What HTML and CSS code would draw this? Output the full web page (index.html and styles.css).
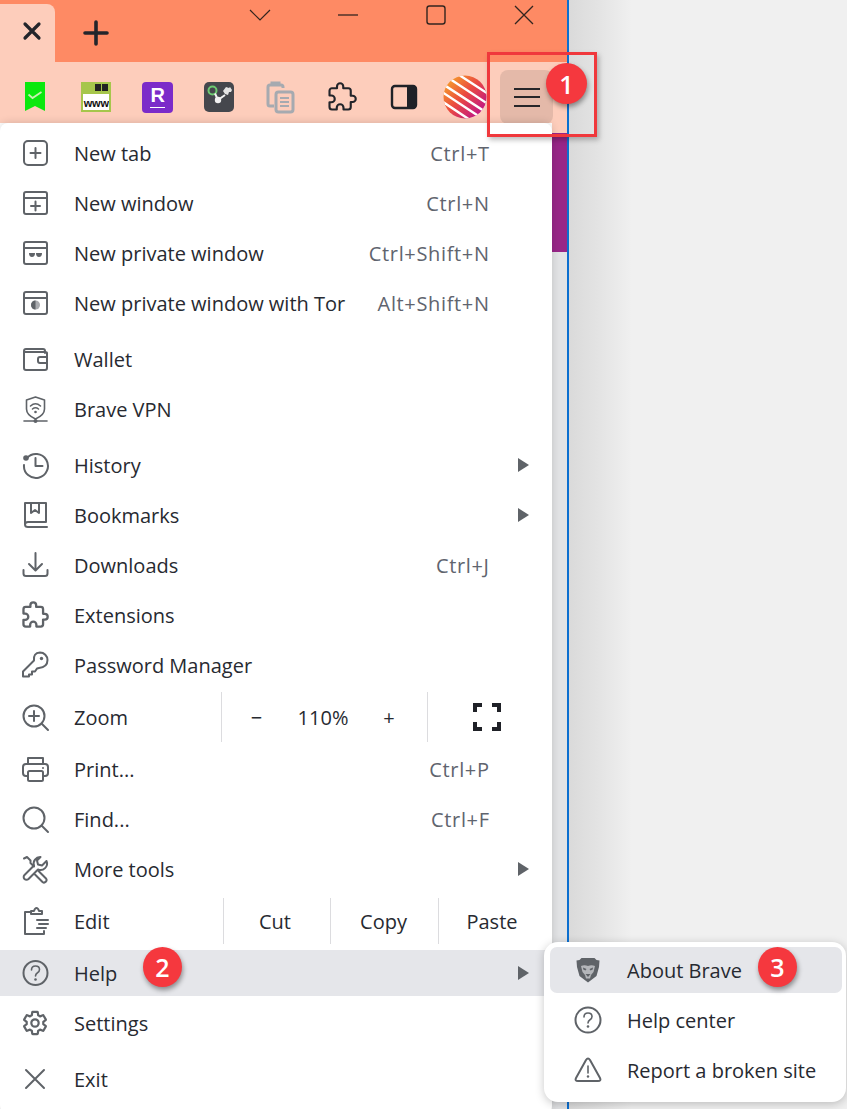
FILE: index.html
```html
<!DOCTYPE html>
<html lang="en">
<head>
<meta charset="utf-8">
<title>Brave menu</title>
<link rel="stylesheet" href="styles.css">
</head>
<body>
<div class="stage">
  <div class="browser">
    <div class="titlebar">
      <div class="tab"><svg class="tb" width="24" height="24" viewBox="0 0 24 24"><path d="M5 5l14 14M19 5L5 19" stroke="#23252b" stroke-width="3.2" stroke-linecap="round"/></svg></div>
      <div class="newtab"><svg width="28" height="28" viewBox="0 0 28 28"><path d="M14 3v22M3 14h22" stroke="#23252b" stroke-width="3.6" stroke-linecap="round"/></svg></div>
      <div class="winctl">
        <div class="wc"><svg width="24" height="14" viewBox="0 0 24 14"><path d="M2 2l10 10L22 2" fill="none" stroke="#33251f" stroke-width="1.2"/></svg></div>
        <div class="wc"><svg width="24" height="14" viewBox="0 0 24 14"><path d="M2 7h20" stroke="#33251f" stroke-width="1.3"/></svg></div>
        <div class="wc"><svg width="22" height="22" viewBox="0 0 22 22"><rect x="2" y="2" width="18" height="18" rx="2.5" fill="none" stroke="#33251f" stroke-width="1.4"/></svg></div>
        <div class="wc"><svg width="22" height="22" viewBox="0 0 22 22"><path d="M2 2l18 18M20 2L2 20" stroke="#33251f" stroke-width="1.3"/></svg></div>
      </div>
    </div>
    <div class="toolbar">
      <div class="tcell"><svg width="34" height="34" viewBox="0 0 34 34"><path d="M7 2h20v29l-10-5-10 5z" fill="#0be80e"/><path d="M10.500 14.500l4 3.500 9-6" fill="none" stroke="#c8f0b0" stroke-width="1.800"/></svg></div>
      <div class="tcell"><div class="www"><span class="www-top"><i></i><i></i></span><span class="www-text">www</span></div></div>
      <div class="tcell"><div class="rak"><span>R</span><i></i></div></div>
      <div class="tcell"><svg width="34" height="34" viewBox="0 0 34 34"><rect x="2" y="2" width="30" height="30" rx="5" fill="#45474d"/><circle cx="10.500" cy="10.500" r="4" fill="none" stroke="#6ecb72" stroke-width="2"/><circle cx="16" cy="20" r="3.200" fill="#f2f2f2"/><path d="M13 13.500l3 6.500 7-5" fill="none" stroke="#f2f2f2" stroke-width="2"/><path d="M21 11l3-4 3 1 1-1 2 3-1 2-2 0-1 3-3-1z" fill="#e4e4e4"/></svg></div>
      <div class="tcell tclip"><svg width="34" height="34" viewBox="0 0 34 34" fill="none" stroke="#a6aab0" stroke-width="3"><path d="M21 8V7q0-2-2-2H8Q6 5 6 7v17q0 2 2 2h4"/><path d="M10 5V3h7v2"/><rect x="14" y="12" width="17" height="20" rx="2.500" fill="#fdcdbb"/><path d="M18 18h9M18 22h9M18 26h9" stroke-width="2.200"/></svg></div>
      <div class="tcell"><svg width="30" height="30" viewBox="0 0 24 24"><path d="M20.500 11H19V7c0-1.100-.9-2-2-2h-4V3.500C13 2.120 11.880 1 10.500 1S8 2.120 8 3.500V5H4c-1.100 0-1.990.9-1.990 2v3.800H3.500c1.490 0 2.700 1.210 2.700 2.700s-1.210 2.700-2.700 2.700H2V20c0 1.100.9 2 2 2h3.800v-1.500c0-1.490 1.210-2.700 2.700-2.700s2.700 1.210 2.700 2.700V22H17c1.100 0 2-.9 2-2v-4h1.500c1.380 0 2.500-1.120 2.500-2.500S21.880 11 20.500 11z" fill="none" stroke="#22242a" stroke-width="1.700" stroke-linejoin="round"/></svg></div>
      <div class="tcell"><svg width="30" height="28" viewBox="0 0 30 28"><rect x="3" y="3" width="24" height="22" rx="3" fill="none" stroke="#1f2127" stroke-width="2.400"/><path d="M18 3h6q3 0 3 3v16q0 3-3 3h-6z" fill="#1f2127"/></svg></div>
      <div class="tcell"><svg width="44" height="44" viewBox="0 0 44 44"><defs><linearGradient id="sun" x1="0" y1=".2" x2=".85" y2="1"><stop offset="0" stop-color="#f6a02a"/><stop offset=".45" stop-color="#ea4a40"/><stop offset="1" stop-color="#bb1090"/></linearGradient><clipPath id="disc"><circle cx="22" cy="22" r="21.500"/></clipPath></defs><g clip-path="url(#disc)"><rect width="44" height="44" fill="url(#sun)"/><path d="M10-4L50 22M4 2L48 31M-2 8L44 38M-4 15L40 44M-6 23L33 49M-8 31L26 53" stroke="#fff" stroke-width="2.400"/></g></svg></div>
      <div class="tcell tmenu"><span class="burger"><i></i><i></i><i></i></span></div>
    </div>
    <div class="content"><div class="scroll"><div class="scrolltop"></div><div class="thumb"></div></div></div>
  </div>

  <div class="menu">
    <div class="row"><svg class="ic" viewBox="0 0 30 30"><rect x="4" y="3" width="23" height="24" rx="4"/><path d="M15.500 10v10M10.500 15h10"/></svg><span class="lbl">New tab</span><span class="key">Ctrl+T</span></div>
    <div class="row"><svg class="ic" viewBox="0 0 30 30"><rect x="4" y="4" width="23" height="22" rx="2"/><path d="M4 10h23M15.500 13.500v9M11 18h9"/></svg><span class="lbl">New window</span><span class="key">Ctrl+N</span></div>
    <div class="row"><svg class="ic" viewBox="0 0 30 30"><rect x="4" y="4" width="23" height="22" rx="2"/><path d="M4 10h23"/><path class="fl" d="M9 15h6q0 4-3 4t-3-4zM16 15h6q0 4-3 4t-3-4z"/></svg><span class="lbl">New private window</span><span class="key">Ctrl+Shift+N</span></div>
    <div class="row"><svg class="ic" viewBox="0 0 30 30"><rect x="4" y="4" width="23" height="22" rx="2"/><path d="M4 10h23"/><circle class="fl soft" cx="15.500" cy="17" r="4.500"/><path class="fl" d="M15.500 12.500a4.500 4.500 0 0 0 0 9z"/></svg><span class="lbl">New private window with Tor</span><span class="key">Alt+Shift+N</span></div>

    <div class="row gap6"><svg class="ic" viewBox="0 0 30 30"><path d="M25 9V7q0-2-2-2H6Q4 5 4 7v17q0 2 2 2h19q2 0 2-2V9q0-1-2-1H4"/><path d="M27 13h-7q-2 0-2 2v2q0 2 2 2h7"/></svg><span class="lbl">Wallet</span></div>
    <div class="row"><svg class="ic" viewBox="0 0 30 30"><path class="thin" d="M15.500 3l9 3v9q0 6-9 10-9-4-9-10V6z"/><path class="thin" d="M10.500 12q5-4.500 10 0M12.500 15q3-2.500 6 0"/><circle class="fl" cx="15.500" cy="18" r="1.300"/><path class="thin" d="M4 27h23"/><circle class="fl" cx="15.500" cy="27" r="2"/></svg><span class="lbl">Brave VPN</span></div>

    <div class="row gap6"><svg class="ic" viewBox="0 0 30 30"><path d="M7 8a12 12 0 1 1-3 7"/><circle class="fl" cx="6" cy="8" r="2.800"/><path d="M15.500 8v8h7"/></svg><span class="lbl">History</span><svg class="arrow" width="12" height="16" viewBox="0 0 12 16"><path d="M1 1l11 7-11 7z"/></svg></div>
    <div class="row"><svg class="ic" viewBox="0 0 30 30"><path d="M5 24V3h21v19H8q-3 0-3 2.500T8 27h19"/><path d="M11 3v10l4-3 4 3V3"/></svg><span class="lbl">Bookmarks</span><svg class="arrow" width="12" height="16" viewBox="0 0 12 16"><path d="M1 1l11 7-11 7z"/></svg></div>
    <div class="row"><svg class="ic" viewBox="0 0 30 30"><path d="M15.500 3v17M9 14l6.500 6.500L22 14"/><path d="M3.500 20v3.500q0 2.500 2.500 2.500h19q2.500 0 2.500-2.500V20"/></svg><span class="lbl">Downloads</span><span class="key">Ctrl+J</span></div>
    <div class="row"><svg class="ic" viewBox="-1 -1 26 26"><path d="M20.500 11H19V7c0-1.100-.9-2-2-2h-4V3.500C13 2.120 11.880 1 10.500 1S8 2.120 8 3.500V5H4c-1.100 0-1.990.9-1.990 2v3.800H3.500c1.490 0 2.700 1.210 2.700 2.700s-1.210 2.700-2.700 2.700H2V20c0 1.100.9 2 2 2h3.800v-1.500c0-1.490 1.210-2.700 2.700-2.700s2.700 1.210 2.700 2.700V22H17c1.100 0 2-.9 2-2v-4h1.500c1.380 0 2.500-1.120 2.500-2.500S21.880 11 20.500 11z"/></svg><span class="lbl">Extensions</span></div>
    <div class="row"><svg class="ic" viewBox="0 0 30 30"><path d="M20 2.500a7.500 7.500 0 0 1 7.500 7.500q0 7-8.500 8l-2 .5-2 3h-3v3H9v2H3v-5l11-11q-1-7.500 6-8z"/><circle class="fl" cx="21.500" cy="8.500" r="1.700"/></svg><span class="lbl">Password Manager</span></div>

    <div class="row gap2 nopad"><svg class="ic" viewBox="0 0 30 30"><circle cx="14" cy="14" r="10.500"/><path d="M21.500 21.500L28 28M14 9v10M9 14h10"/></svg><span class="lbl lbl-fix">Zoom</span>
      <div class="ctl"><span class="cell c70">−</span><span class="cell c64">110%</span><span class="cell c68">+</span><span class="cell cfull"><svg width="30" height="30" viewBox="0 0 30 30"><path d="M3 10V3h7M20 3h7v7M27 20v7h-7M10 27H3v-7" fill="none" stroke="#1f2127" stroke-width="4"/></svg></span></div>
    </div>
    <div class="row gap2"><svg class="ic" viewBox="0 0 30 30"><path d="M8 10V4h15v6M8 22H6q-3 0-3-3v-6q0-3 3-3h19q3 0 3 3v6q0 3-3 3h-2"/><rect x="8" y="17" width="15" height="10" rx="1.500"/><circle class="fl" cx="23" cy="14" r="1"/></svg><span class="lbl">Print...</span><span class="key">Ctrl+P</span></div>
    <div class="row"><svg class="ic" viewBox="0 0 30 30"><circle cx="14" cy="14" r="10.500"/><path d="M21.500 21.500L28 28"/></svg><span class="lbl">Find...</span><span class="key">Ctrl+F</span></div>
    <div class="row"><svg class="ic" viewBox="0 0 30 30"><path d="M20.500 3a6.500 6.500 0 0 0-6.500 8.500L4.500 21a2.800 2.800 0 0 0 4 4l9.500-9.500a6.500 6.500 0 0 0 8.500-8.500L22 11.500l-4-1-1-4z"/><path d="M4 4.500l3-1.500 3.500 3.500V9l3.500 3.500"/><path d="M18.500 17l7.500 7.500a2.500 2.500 0 0 1-3.500 3.500L15 20.500"/></svg><span class="lbl">More tools</span><svg class="arrow" width="12" height="16" viewBox="0 0 12 16"><path d="M1 1l11 7-11 7z"/></svg></div>

    <div class="row gap2 nopad"><svg class="ic" viewBox="0 0 30 30"><path d="M11 6H5v22h19v-3"/><path d="M11 8V5h3q1-3 2.500-3T19 5h3v3z"/><path d="M17 14h11M19 18h9M17 22h9"/></svg><span class="lbl lbl-fix2">Edit</span>
      <div class="ctl ctl-edit"><span class="cell c107 cut">Cut</span><span class="cell c108 copy">Copy</span><span class="cell c107">Paste</span></div>
    </div>
    <div class="row gap2 active"><svg class="ic" viewBox="0 0 30 30"><circle cx="15.500" cy="15" r="12"/><path class="thin" d="M11.500 12q0-4 4-4t4 3.500q0 2-2 3.200t-2 3.300"/><circle class="fl" cx="15.500" cy="21.500" r="1.300"/></svg><span class="lbl">Help</span><svg class="arrow" width="12" height="16" viewBox="0 0 12 16"><path d="M1 1l11 7-11 7z"/></svg></div>
    <div class="row"><svg class="ic" viewBox="-1.500 -1.500 27 27"><path d="M19.430 12.980c.04-.32.07-.64.07-.98s-.03-.66-.07-.98l2.110-1.650c.19-.15.24-.42.12-.64l-2-3.460c-.12-.22-.39-.3-.61-.22l-2.490 1c-.52-.4-1.080-.73-1.690-.98l-.38-2.650C14.460 2.180 14.250 2 14 2h-4c-.25 0-.46.18-.49.42l-.38 2.650c-.61.25-1.170.59-1.690.98l-2.490-1c-.23-.09-.49 0-.61.22l-2 3.460c-.13.22-.07.49.12.64l2.110 1.650c-.04.32-.07.65-.07.98s.03.66.07.98l-2.110 1.650c-.19.15-.24.42-.12.64l2 3.460c.12.22.39.3.61.22l2.490-1c.52.4 1.080.73 1.690.98l.38 2.650c.03.24.24.42.49.42h4c.25 0 .46-.18.49-.42l.38-2.650c.61-.25 1.170-.59 1.690-.98l2.490 1c.23.09.49 0 .61-.22l2-3.460c.12-.22.07-.49-.12-.64l-2.110-1.650z"/><circle cx="12" cy="12" r="3.300"/></svg><span class="lbl">Settings</span></div>
    <div class="row gap6"><svg class="ic" viewBox="0 0 30 30"><path d="M6 6l18 18M24 6L6 24"/></svg><span class="lbl">Exit</span></div>
  </div>

  <div class="submenu">
    <div class="subrow active"><svg class="ic sic" viewBox="0 0 30 30"><path class="fl" d="M8.500 3h13l2 2 3 .5-.5 6.500-2.500 9-8.500 6.500-8.500-6.500-2.500-9-.5-6.500 3-.5z"/><path class="lion" d="M8 11q3.500-1.500 7 0 3.500-1.500 7 0l-1.500 6-2.500 3-1 3.500h-4l-1-3.500-2.500-3z"/><path class="fl" d="M10 12.500l3.500 1.500-1 1.500-2.200-1zM20 12.500l-3.500 1.500 1 1.500 2.200-1zM12.500 19h5L15 22z"/></svg><span>About Brave</span></div>
    <div class="subrow"><svg class="ic sic" viewBox="0 0 30 30"><circle cx="15" cy="15" r="12.500"/><path class="thin" d="M11 12q0-4 4-4t4 3.500q0 2-2 3.200t-2 3.300"/><circle class="fl" cx="15" cy="21.500" r="1.300"/></svg><span>Help center</span></div>
    <div class="subrow"><svg class="ic sic" viewBox="0 0 30 30"><path d="M15 3.500q1 0 2 1.500l10 18q1.500 3-2 3H5q-3.500 0-2-3L13 5q1-1.500 2-1.500z"/><path class="thin" d="M15 11v7"/><circle class="fl" cx="15" cy="21.500" r="1.200"/></svg><span>Report a broken site</span></div>
  </div>

  <div class="callout"></div>
  <div class="badge b1">1</div>
  <div class="badge b2">2</div>
  <div class="badge b3">3</div>
</div>
</body>
</html>
```

FILE: styles.css
```css
* { box-sizing: border-box; }
html, body { margin: 0; padding: 0; }
body { width: 847px; height: 1109px; overflow: hidden; font-family: "Open Sans", "Noto Sans", sans-serif; color: #272a31; }
.stage { position: relative; width: 847px; height: 1109px; overflow: hidden; background: linear-gradient(90deg, #dadada 569px, #e4e4e4 600px, #f0f0f0 632px, #f0f0f0 100%); }
.browser { width: 569px; height: 1109px; display: flex; flex-direction: column; border-right: 2px solid #0b6fd0; background: #fff; }

.titlebar { height: 62px; background: #fe8a64; display: flex; align-items: flex-start; flex: none; }
.tab { width: 55px; height: 58px; margin-top: 4px; background: #fdcdbb; border-radius: 0 8px 0 0; display: flex; align-items: center; justify-content: center; padding: 0 0 0 8px; }
.tab svg { margin-top: -4px; }
.newtab { width: 82px; height: 60px; margin-top: 3px; display: flex; align-items: center; justify-content: center; }
.winctl { margin-left: auto; margin-right: -1px; display: flex; }
.wc { width: 88px; height: 30px; display: flex; align-items: center; justify-content: center; }

.toolbar { height: 61px; background: #fdcdbb; display: flex; align-items: flex-start; padding: 8px 0 0 4px; flex: none; }
.tcell { width: 61.5px; height: 54px; display: flex; align-items: center; justify-content: center; flex: none; }
.tclip svg { margin-left: -4px; }
.tmenu { width: 53px; margin-left: 4px; background: #e4b9a9; border-radius: 8px; }
.burger { display: flex; flex-direction: column; gap: 6.5px; width: 26px; }
.burger i { display: block; height: 2px; background: #26262a; }

.www { width: 30px; height: 30px; background: #fff; border: 2px solid #a6c64b; display: flex; flex-direction: column; overflow: hidden; }
.www-top { height: 10px; background: #a6c64b; display: flex; justify-content: flex-end; gap: 1px; padding: 0 1px; flex: none; }
.www-top i { display: block; width: 6px; height: 7px; background: #222; }
.www-text { font: 700 11px/14px "Liberation Sans", sans-serif; color: #111; text-align: center; letter-spacing: -.2px; padding-top: 2px; }
.rak { width: 31px; height: 31px; background: #7b2bc9; border-radius: 4px; display: flex; flex-direction: column; align-items: center; color: #fff; }
.rak span { font: 700 20px/24px "Liberation Sans", sans-serif; margin-top: 1px; }
.rak i { display: block; width: 15px; height: 1.5px; background: #fff; }

.content { flex: 1; display: flex; justify-content: flex-end; background: #fff; }
.scroll { width: 15px; background: #e2e3e5; }
.scrolltop { height: 10px; background: #fdcdbb; }
.thumb { height: 119px; background: #982688; }

.menu { position: absolute; left: 0; top: 123px; width: 552px; height: 990px; background: #fff; border-radius: 8px; box-shadow: 0 0 8px rgba(0,0,0,.16); padding-top: 7px; display: flex; flex-direction: column; gap: 4px; }
.row { height: 46px; display: flex; align-items: center; padding-left: 20px; padding-right: 63px; font-size: 20px; flex: none; }
.row.gap6 { margin-top: 6px; }
.row.gap2 { margin-top: 2px; }
.row.nopad { padding-right: 6px; }
.row.active { background: #e5e6ea; border-radius: 0 4px 4px 0; }
.ic { width: 30px; height: 30px; flex: none; margin-right: 24px; fill: none; stroke: #5f6368; stroke-width: 2; stroke-linejoin: round; stroke-linecap: round; }
.ic .fl { fill: #5f6368; stroke: none; }
.ic .soft { fill: #a9abaf; }
.ic .thin { stroke-width: 1.6; }
.ic .lion { fill: #b4b6ba; stroke: none; }
.lbl { white-space: nowrap; }
.key { margin-left: auto; color: #60646e; white-space: nowrap; letter-spacing: .65px; margin-right: -.65px; }
.arrow { margin-left: auto; margin-right: -40px; fill: #5f6368; }
.lbl-fix { width: 147px; flex: none; }
.lbl-fix2 { width: 149px; flex: none; }

.ctl { display: flex; height: 50px; flex: none; align-items: center; }
.ctl-edit .cell { height: 46px; }
.cell { display: flex; align-items: center; justify-content: center; height: 50px; white-space: nowrap; }
.c70 { width: 70px; border-left: 1px solid #dcdcdf; }
.c64 { width: 64px; }
.c68 { width: 72px; padding-right: 4px; }
.cfull { width: 118px; border-left: 1px solid #dcdcdf; }
.c107, .c108 { border-left: 1px solid #dcdcdf; }
.c107 { width: 107px; }
.c108 { width: 108px; }
.cut { padding-right: 4px; }
.copy { padding-right: 2px; }

.submenu { position: absolute; left: 544px; top: 942px; width: 302px; height: 160px; background: #fff; border-radius: 14px; box-shadow: 0 2px 10px rgba(0,0,0,.22); padding: 5px 4px 0 6px; display: flex; flex-direction: column; gap: 4px; }
.subrow { height: 46px; display: flex; align-items: center; padding-left: 23px; font-size: 20px; border-radius: 7px; white-space: nowrap; }
.subrow .ic { margin-right: 24px; }
.subrow.active { background: #e5e6ea; }

.callout { position: absolute; left: 487px; top: 52px; width: 110px; height: 85px; border: 3px solid #f0383c; box-shadow: 2px 3px 5px rgba(0,0,0,.25); }
.badge { position: absolute; border-radius: 50%; background: #f5383e; color: #fff; font-size: 25px; font-weight: 600; display: flex; align-items: center; justify-content: center; box-shadow: 1px 3px 5px rgba(0,0,0,.4); }
.b1 { left: 546px; top: 63px; width: 41px; height: 41px; }
.b2 { left: 143px; top: 947px; width: 39px; height: 40px; }
.b3 { left: 758px; top: 947px; width: 39px; height: 40px; }
```
